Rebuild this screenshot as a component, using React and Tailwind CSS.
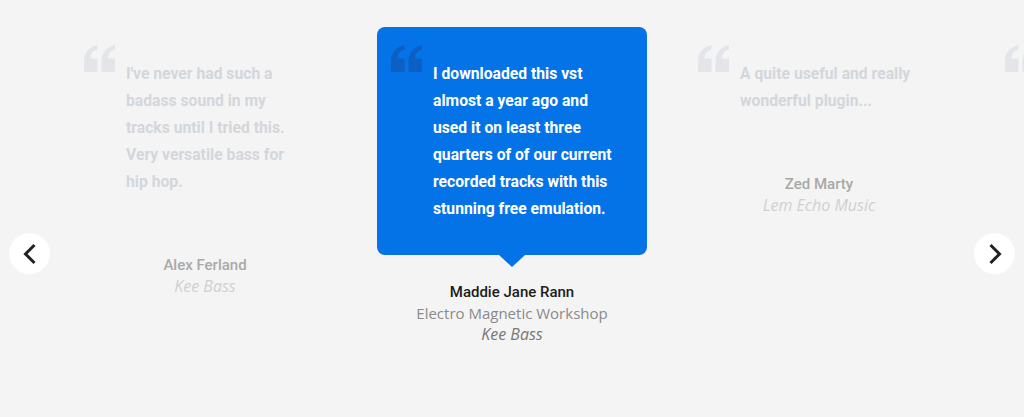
import React from 'react';

const slides = [
  {
    quote: "I've never had such a badass sound in my tracks until I tried this. Very versatile bass for hip hop.",
    name: 'Alex Ferland',
    product: 'Kee Bass',
  },
  {
    quote:
      'I downloaded this vst almost a year ago and used it on least three quarters of of our current recorded tracks with this stunning free emulation.',
    name: 'Maddie Jane Rann',
    company: 'Electro Magnetic Workshop',
    product: 'Kee Bass',
    active: true,
  },
  {
    quote: 'A quite useful and really wonderful plugin...',
    name: 'Zed Marty',
    product: 'Lem Echo Music',
  },
  {
    quote: '',
    name: '',
    product: '',
  },
];

const QuoteMark = ({ className }) => (
  <svg viewBox="0 0 31 27" className={className} fill="currentColor">
    <path d="M13.5 0 C5 2 0 8 0 16 L0 27 L13.5 27 L13.5 13.5 L6.5 13.5 C6.5 9 9 5.5 13.5 4.5 Z" />
    <path d="M31 0 C22.5 2 17.5 8 17.5 16 L17.5 27 L31 27 L31 13.5 L24 13.5 C24 9 26.5 5.5 31 4.5 Z" />
  </svg>
);

const Slide = ({ slide }) => {
  const active = slide.active;
  return (
    <div className="w-[270px] shrink-0 flex flex-col">
      <div
        className={`relative flex gap-[11px] rounded-lg pt-[18px] pb-[33px] pl-[14px] pr-[33px] ${
          active ? 'bg-[#0573e8]' : ''
        }`}
      >
        <QuoteMark
          className={`shrink-0 w-[31px] h-[27px] ${
            active ? 'text-[#0d5fc4]' : 'text-[#e3e5e8]'
          }`}
        />
        <p
          className={`mt-[15px] text-[15.7px] leading-[27px] font-bold ${
            active ? 'text-white' : 'text-[#d3d7dc]'
          }`}
        >
          {slide.quote}
        </p>
        {active && (
          <div className="absolute left-[122px] -bottom-[12px] w-0 h-0 border-l-[13px] border-r-[13px] border-t-[12px] border-l-transparent border-r-transparent border-t-[#0573e8]" />
        )}
      </div>
      {slide.name && (
        <div className="mt-[27px] flex flex-col items-center leading-[21px]">
          <div
            className={`text-[15px] font-medium ${
              active ? 'text-[#1c1c1c]' : 'text-[#a9a9a9]'
            }`}
          >
            {slide.name}
          </div>
          {slide.company && (
            <div className="font-['Open_Sans'] text-[15px] text-[#8a8a8a]">{slide.company}</div>
          )}
          <div
            className={`font-['Open_Sans'] text-[16px] italic ${
              active ? 'text-[#777777]' : 'text-[#d0d0d0]'
            }`}
          >
            {slide.product}
          </div>
        </div>
      )}
    </div>
  );
};

const NavButton = ({ side }) => (
  <button
    className={`absolute top-[233px] ${
      side === 'left' ? 'left-[9px]' : 'right-[9px]'
    } w-[41px] h-[41px] rounded-full bg-white flex items-center justify-center`}
    aria-label={side === 'left' ? 'Previous' : 'Next'}
  >
    <svg viewBox="0 0 24 24" className="w-6 h-6" fill="none" stroke="#222" strokeWidth="3">
      {side === 'left' ? <path d="M16.5 3 L7.5 12 L16.5 21" /> : <path d="M7.5 3 L16.5 12 L7.5 21" />}
    </svg>
  </button>
);

export default function App() {
  return (
    <div className="relative w-[1024px] h-[417px] bg-[#f4f4f4] overflow-hidden font-[Roboto,sans-serif]">
      <div className="flex gap-[37px] pl-[70px] pt-[27px]">
        {slides.map((s, i) => (
          <Slide key={i} slide={s} />
        ))}
      </div>
      <NavButton side="left" />
      <NavButton side="right" />
    </div>
  );
}
